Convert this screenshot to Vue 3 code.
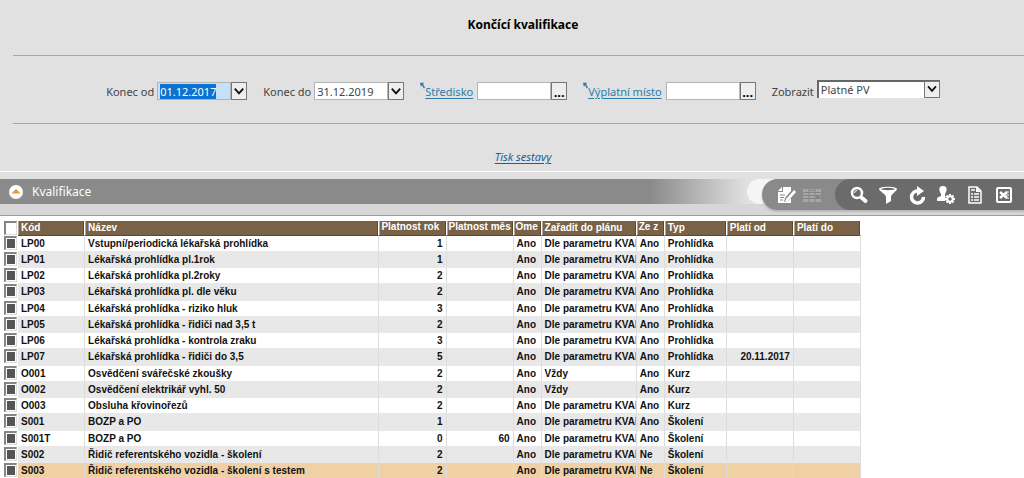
<script setup>
import { onMounted, ref } from 'vue'

const dateFrom = ref('01.12.2017')
const dateTo = ref('31.12.2019')
const centre = ref('')
const payPlace = ref('')
const show = ref('Platné PV')
const fromInput = ref(null)

const plan = 'Dle parametru KVAL'
const rows = [
  ['LP00', 'Vstupní/periodická lékařská prohlídka', '1', '', 'Ano', plan, 'Ano', 'Prohlídka', ''],
  ['LP01', 'Lékařská prohlídka pl.1rok', '1', '', 'Ano', plan, 'Ano', 'Prohlídka', ''],
  ['LP02', 'Lékařská prohlídka pl.2roky', '2', '', 'Ano', plan, 'Ano', 'Prohlídka', ''],
  ['LP03', 'Lékařská prohlídka pl. dle věku', '2', '', 'Ano', plan, 'Ano', 'Prohlídka', ''],
  ['LP04', 'Lékařská prohlídka - riziko hluk', '3', '', 'Ano', plan, 'Ano', 'Prohlídka', ''],
  ['LP05', 'Lékařská prohlídka - řidiči nad 3,5 t', '2', '', 'Ano', plan, 'Ano', 'Prohlídka', ''],
  ['LP06', 'Lékařská prohlídka - kontrola zraku', '3', '', 'Ano', plan, 'Ano', 'Prohlídka', ''],
  ['LP07', 'Lékařská prohlídka - řidiči do 3,5', '5', '', 'Ano', plan, 'Ano', 'Prohlídka', '20.11.2017'],
  ['O001', 'Osvědčení svářečské zkoušky', '2', '', 'Ano', 'Vždy', 'Ano', 'Kurz', ''],
  ['O002', 'Osvědčení elektrikář vyhl. 50', '2', '', 'Ano', 'Vždy', 'Ano', 'Kurz', ''],
  ['O003', 'Obsluha křovinořezů', '2', '', 'Ano', plan, 'Ano', 'Kurz', ''],
  ['S001', 'BOZP a PO', '1', '', 'Ano', plan, 'Ano', 'Školení', ''],
  ['S001T', 'BOZP a PO', '0', '60', 'Ano', plan, 'Ano', 'Školení', ''],
  ['S002', 'Řidič referentského vozidla - školení', '2', '', 'Ano', plan, 'Ne', 'Školení', ''],
  ['S003', 'Řidič referentského vozidla - školení s testem', '2', '', 'Ano', plan, 'Ne', 'Školení', ''],
]
const heads = ['Kód', 'Název', 'Platnost rok', 'Platnost měs', 'Ome', 'Zařadit do plánu', 'Ze z', 'Typ', 'Platí od', 'Platí do']
const raised = [2, 3, 4, 6]
const numeric = [2, 3, 8]
const selected = ref(rows.map(() => true))

onMounted(() => {
  fromInput.value.focus()
  fromInput.value.select()
})
</script>

<template>
  <main class="page">
    <form class="report" @submit.prevent>
      <h1>Končící kvalifikace</h1>
      <div class="filters">
        <div class="field">
          <label for="from">Konec od</label>
          <input id="from" ref="fromInput" v-model="dateFrom" class="active" type="text">
          <button type="button" class="pick" aria-label="Vybrat datum od">
            <svg viewBox="0 0 13 17"><path d="M2 6l4.5 5L11 6" /></svg>
          </button>
        </div>
        <div class="field">
          <label for="to">Konec do</label>
          <input id="to" v-model="dateTo" type="text">
          <button type="button" class="pick" aria-label="Vybrat datum do">
            <svg viewBox="0 0 13 17"><path d="M2 6l4.5 5L11 6" /></svg>
          </button>
        </div>
        <div class="field">
          <svg class="jump" viewBox="0 0 6 8"><path d="M0 0h5L3.700 1.500 6 6 4.500 7 2.500 3 1 5z" /></svg>
          <a href="#centre" id="centre-label">Středisko</a>
          <input id="centre" v-model="centre" type="text" aria-labelledby="centre-label">
          <button type="button" class="pick more" aria-label="Vybrat středisko">...</button>
        </div>
        <div class="field">
          <svg class="jump" viewBox="0 0 6 8"><path d="M0 0h5L3.700 1.500 6 6 4.500 7 2.500 3 1 5z" /></svg>
          <a href="#place" id="place-label">Výplatní místo</a>
          <input id="place" v-model="payPlace" type="text" aria-labelledby="place-label">
          <button type="button" class="pick more" aria-label="Vybrat výplatní místo">...</button>
        </div>
        <div class="field">
          <label for="show">Zobrazit</label>
          <div class="select">
            <select id="show" v-model="show"><option>Platné PV</option></select>
            <span class="drop"><svg viewBox="0 0 13 17"><path d="M2 5l4.500 5L11 5" /></svg></span>
          </div>
        </div>
      </div>
      <div class="print"><a href="#print">Tisk sestavy</a></div>
    </form>

    <header class="section">
      <div class="bar">
        <button type="button" class="fold" aria-label="Sbalit"><svg viewBox="0 0 14 14"><path d="M2.500 8.500L7 4l4.500 4.500z" /></svg></button>
        <h2>Kvalifikace</h2>
      </div>
      <div class="tools">
        <div class="edit">
          <button type="button" aria-label="Upravit">
            <svg viewBox="0 0 20 20">
              <path fill="#fff" d="M7 2h8v4l-6 7-1 4 4-1 3-3v5H2V7h5z" />
              <path fill="#fff" d="M2 6l4-4v4zM18 5l2 2-8 9-3 1 1-3z" />
              <path fill="none" stroke="#858585" d="M4 10h5M4 12.500h4M4 15h3M17.500 4.500l-8 9" />
            </svg>
          </button>
          <button type="button" aria-label="Tabulka" disabled>
            <svg viewBox="0 0 20 20">
              <path fill="#a6a6a6" d="M1 4h18v13H1z" />
              <path fill="none" stroke="#858585" d="M1 7.500h18M1 10.500h18M1 13.500h18M7 4v13M13 4v13" />
              <path fill="#858585" d="M8 5h4v1H8zM14 11h4v2h-4z" />
            </svg>
          </button>
        </div>
        <div class="view">
          <button type="button" aria-label="Hledat">
            <svg viewBox="0 0 20 20">
              <circle cx="8" cy="8" r="5" fill="#6b6b6b" stroke="#fff" stroke-width="2.500" />
              <path fill="none" stroke="#fff" stroke-width="1" d="M5.500 8A2.500 2.500 0 0 1 8 5.500" />
              <path fill="none" stroke="#fff" stroke-width="4" stroke-linecap="round" d="M13 13l3.500 3" />
            </svg>
          </button>
          <button type="button" aria-label="Filtr">
            <svg viewBox="0 0 20 20">
              <path fill="#fff" d="M1 4c0-3 18-3 18 0 0 2-6 5-6 8v4l-5 3v-7c0-3-7-6-7-8z" />
              <ellipse cx="10" cy="4" rx="7" ry="1.200" fill="#6b6b6b" />
            </svg>
          </button>
          <button type="button" aria-label="Obnovit">
            <svg viewBox="0 0 20 20">
              <path fill="none" stroke="#fff" stroke-width="3.500" d="M11 6A6 6 0 1 0 16.500 12" />
              <path fill="#fff" d="M10 1l7 5-7 5z" />
            </svg>
          </button>
          <button type="button" aria-label="Nastavení uživatele">
            <svg viewBox="0 0 20 20">
              <path fill="#fff" d="M7 1c5 0 4 5 2 8v2l3 1-2 4H1v-2c0-2 2-2 4-3V9C3 6 2 1 7 1z" />
              <circle cx="14" cy="14" r="5" fill="#6b6b6b" />
              <circle cx="14" cy="14" r="2.800" fill="none" stroke="#fff" stroke-width="2" />
              <path fill="none" stroke="#fff" stroke-width="2" d="M14 9v2M14 17v2M9 14h2M17 14h2M10.500 10.500l1.500 1.500M16 16l1.500 1.500M17.500 10.500L16 12M12 16l-1.500 1.500" />
            </svg>
          </button>
          <button type="button" aria-label="Sestava">
            <svg viewBox="0 0 20 20">
              <path fill="none" stroke="#fff" stroke-width="1.500" d="M4 2h8l4 4v12H4z" />
              <path fill="#fff" d="M11 2v5h5z" />
              <path fill="none" stroke="#fff" stroke-width="1.500" d="M6 9h2M9 9h5M6 12h2M9 12h5M6 15h2M9 15h5M6 5h4" />
            </svg>
          </button>
          <button type="button" aria-label="Export do tabulky">
            <svg viewBox="0 0 20 20">
              <rect x="3" y="3" width="14" height="14" rx="1" fill="none" stroke="#fff" stroke-width="2" />
              <path fill="none" stroke="#fff" stroke-width="2.500" d="M6 7l7 6M13 7l-7 6" />
              <path fill="none" stroke="#fff" d="M12 7h3M12 10h3M12 13h3" />
            </svg>
          </button>
        </div>
      </div>
    </header>

    <div class="grid">
      <table>
        <colgroup>
          <col class="c-check"><col class="c-code"><col class="c-name"><col class="c-num"><col class="c-num">
          <col class="c-short"><col class="c-plan"><col class="c-short"><col class="c-type"><col class="c-num"><col class="c-num">
        </colgroup>
        <thead>
          <tr>
            <th class="check"><input type="checkbox" aria-label="Vybrat vše"></th>
            <th v-for="(head, i) in heads" :key="head" :class="{ raised: raised.includes(i) }">{{ head }}</th>
          </tr>
        </thead>
        <tbody>
          <tr v-for="(row, r) in rows" :key="row[0]" :class="{ current: row[0] === 'S003' }">
            <td class="check"><input v-model="selected[r]" type="checkbox" :aria-label="'Vybrat ' + row[0]"></td>
            <td v-for="(cell, i) in row" :key="i" :class="{ num: numeric.includes(i) }">{{ cell }}</td>
            <td></td>
          </tr>
        </tbody>
      </table>
    </div>
  </main>
</template>

<style>
html { overflow: hidden; background: #fff; }
</style>

<style scoped>
.page { font-family: "Noto Sans", sans-serif; color: #444; }
h1, h2 { margin: 0; }
button { padding: 0; border: 0; background: none; font: inherit; }
.report { height: 171px; background: #e1e1e1; border-bottom: 1px solid #fafafa; }
h1 {
  margin-left: 13px; padding: 15px 0 0 9px; height: 40px; border-bottom: 1px solid #a5a5a5;
  color: #000; font-size: 12px; line-height: 20px; text-align: center;
}
.filters {
  display: flex; justify-content: center; gap: 16px; margin-left: 13px; padding: 26px 0 22px 9px;
  border-bottom: 1px solid #a5a5a5; font-size: 11px; line-height: 18px;
}
.field { display: flex; height: 19px; white-space: nowrap; }
.field label { margin-right: 3px; padding-top: 1px; }
.field a { height: 17px; margin: 1px 4px 0 0; color: #2a7dab; line-height: 18px; text-decoration: underline; text-underline-offset: 2px; }
.field input {
  box-sizing: border-box; width: 74px; height: 18px; padding: 0 2px; border: 1px solid #b5b5b5;
  background: #fff; color: #444; font: 11px "Noto Sans", sans-serif; outline: none;
}
.field input.active { background: #c6e0fa; }
.field input::selection { background: #0a72d0; color: #fff; }
.pick { box-sizing: border-box; width: 16px; height: 18px; border: 1px solid #777; background: #eee; }
.pick svg, .drop svg { display: block; width: 100%; height: 100%; fill: none; stroke: #111; stroke-width: 2; }
.more { color: #000; font-weight: bold; font-size: 13px; line-height: 18px; }
.jump { width: 5px; height: 8px; fill: #2a7dab; }
.select {
  position: relative; box-sizing: border-box; width: 123px; height: 18px; margin-top: -2px;
  border: solid #666; border-width: 2px 0 0 2px; background: #fff;
}
.select select {
  width: 100%; height: 16px; padding: 0 0 0 2px; border: 0; background: none; appearance: none;
  color: #444; font: 11px/16px "Noto Sans", sans-serif; display: block; outline: none;
}
.drop { position: absolute; top: -1px; right: 0; box-sizing: border-box; width: 16px; height: 17px; border: 1px solid #777; background: #eee; pointer-events: none; }
.print { padding: 24px 0 0 22px; text-align: center; font-size: 11px; line-height: 18px; font-style: italic; }
.print a { color: #1a5f9c; text-underline-offset: 2px; }

.section { display: flex; align-items: flex-start; height: 36px; border-top: 7px solid #e1e1e1; border-bottom: 1px solid #9c9c9c; background: #d7d7d7; }
.bar {
  position: relative; display: flex; flex: 1; align-items: center; gap: 9px; height: 25px; padding-left: 9px;
  background: linear-gradient(to right, #8a8a8a calc(100% - 112px), #e1e1e1 calc(100% - 15px));
}
.bar::after { content: ""; position: absolute; right: -25px; top: 0; width: 40px; height: 25px; border-radius: 13px 0 0 13px; background: #f5f5f5; }
.bar h2 { color: #fff; font-size: 12px; line-height: 20px; font-weight: normal; }
.fold { width: 14px; height: 14px; border-radius: 50%; background: #fff; }
.fold svg { display: block; fill: #e99a2c; }
.tools { position: relative; display: flex; height: 31px; border-radius: 16px 0 0 16px; background: #8a8a8a; box-shadow: 0 2px 2px #b8b8b8; }
.edit, .view { display: flex; align-items: center; }
.edit { gap: 6px; padding-left: 14px; padding-right: 13px; }
.view { gap: 9px; height: 31px; padding: 0 10px 0 14px; border-radius: 16px 0 0 16px; background: #6b6b6b; }
.tools button, .tools svg { display: block; width: 20px; height: 20px; }

.grid { padding: 5px 0 0 4px; }
table { table-layout: fixed; width: 857px; border-collapse: separate; border-spacing: 0; font: bold 10px/14px "Liberation Sans", Arial, sans-serif; }
.c-check { width: 14px; }
.c-code { width: 67px; }
.c-name { width: 294px; }
.c-num { width: 67px; }
.c-short { width: 28px; }
.c-plan { width: 95px; }
.c-type { width: 62px; }
th, td { box-sizing: border-box; padding: 0 3px; overflow: hidden; white-space: nowrap; text-align: left; }
th { height: 15px; border-right: 1px solid #fff; border-bottom: 1px solid #594a35; background: #796246; color: #fff; box-shadow: inset -1px 0 #594a35, inset 1px 0 #b5a78f; }
th.raised { line-height: 12px; padding: 0 2px 2px; }
td { height: 16px; border-right: 1px solid #ddd; border-bottom: 1px solid #e8e8e8; color: #111; }
tbody tr:nth-child(4n) td { height: 17px; }
tbody tr:nth-child(even) td { background: #e8e8e8; }
tbody tr.current td { background: #f0d0a5; }
td.num { text-align: right; }
tbody tr .check.check, .check { padding: 0; border: 0; background: #fff; box-shadow: none; vertical-align: top; }
.check input {
  display: block; box-sizing: border-box; width: 13px; height: 14px; margin: 0; appearance: none;
  border: solid #858585; border-width: 2px 1px 1px 2px; border-right-color: #ddd; border-bottom-color: #ddd; background: #fff;
}
.check input:checked { background: #555; box-shadow: inset 0 0 0 1px #fff; }
</style>
